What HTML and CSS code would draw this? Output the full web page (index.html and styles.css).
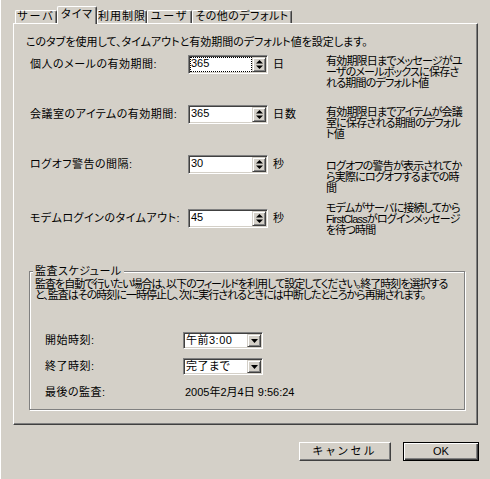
FILE: index.html
```html
<!DOCTYPE html>
<html lang="ja">
<head>
<meta charset="utf-8">
<title>タイマ</title>
<link rel="stylesheet" href="styles.css">
</head>
<body>
<div class="window">
  <div class="tabs">
    <div class="tab t-server">サーバ</div>
    <div class="tab t-timer selected">タイマ</div>
    <div class="tab t-limit">利用制限</div>
    <div class="tab t-user">ユーザ</div>
    <div class="tab t-other">その他のデフォルト</div>
  </div>
  <div class="panel">
    <p class="intro">このタブを使用して、タイムアウトと有効期間のデフォルト値を設定します。</p>

    <div class="row r1">
      <span class="label">個人のメールの有効期間:</span>
      <div class="spin"><span class="val focus">365</span><span class="spinbtn"><svg width="7" height="11" viewBox="0 0 7 11"><polygon points="0,4.5 3.5,1 7,4.5" fill="#000"/><polygon points="0,6.5 3.5,10 7,6.5" fill="#000"/></svg></span></div>
      <span class="unit">日</span>
      <p class="desc">有効期限日までメッセージがユ<br>ーザのメールボックスに保存さ<br>れる期間のデフォルト値</p>
    </div>

    <div class="row r2">
      <span class="label">会議室のアイテムの有効期間:</span>
      <div class="spin"><span class="val">365</span><span class="spinbtn"><svg width="7" height="11" viewBox="0 0 7 11"><polygon points="0,4.5 3.5,1 7,4.5" fill="#000"/><polygon points="0,6.5 3.5,10 7,6.5" fill="#000"/></svg></span></div>
      <span class="unit">日数</span>
      <p class="desc">有効期限日までアイテムが会議<br>室に保存される期間のデフォル<br>ト値</p>
    </div>

    <div class="row r3">
      <span class="label">ログオフ警告の間隔:</span>
      <div class="spin"><span class="val">30</span><span class="spinbtn"><svg width="7" height="11" viewBox="0 0 7 11"><polygon points="0,4.5 3.5,1 7,4.5" fill="#000"/><polygon points="0,6.5 3.5,10 7,6.5" fill="#000"/></svg></span></div>
      <span class="unit">秒</span>
      <p class="desc">ログオフの警告が表示されてか<br>ら実際にログオフするまでの時<br>間</p>
    </div>

    <div class="row r4">
      <span class="label">モデムログインのタイムアウト:</span>
      <div class="spin"><span class="val">45</span><span class="spinbtn"><svg width="7" height="11" viewBox="0 0 7 11"><polygon points="0,4.5 3.5,1 7,4.5" fill="#000"/><polygon points="0,6.5 3.5,10 7,6.5" fill="#000"/></svg></span></div>
      <span class="unit">秒</span>
      <p class="desc">モデムがサーバに接続してから<br>FirstClassがログインメッセージ<br>を待つ時間</p>
    </div>

    <fieldset class="group">
      <legend>監査スケジュール</legend>
      <p class="group-text">監査を自動で行いたい場合は、以下のフィールドを利用して設定してください。終了時刻を選択する<br>と、監査はその時刻に一時停止し、次に実行されるときには中断したところから再開されます。</p>
      <div class="sched">
        <span class="label">開始時刻:</span>
        <div class="combo"><span class="cval">午前3:00</span><span class="dropbtn"><svg width="7" height="4" viewBox="0 0 7 4"><polygon points="0,0 7,0 3.5,4" fill="#000"/></svg></span></div>
        <span class="label">終了時刻:</span>
        <div class="combo"><span class="cval">完了まで</span><span class="dropbtn"><svg width="7" height="4" viewBox="0 0 7 4"><polygon points="0,0 7,0 3.5,4" fill="#000"/></svg></span></div>
        <span class="label">最後の監査:</span>
        <span class="last">2005年2月4日 9:56:24</span>
      </div>
    </fieldset>
  </div>
  <div class="footer">
    <button class="btn cancel">キャンセル</button>
    <button class="btn ok default">OK</button>
  </div>
</div>
</body>
</html>
```

FILE: styles.css
```css
html, body {
  margin: 0;
  padding: 0;
}

body {
  background: #d4d0c8;
  color: #000;
  font-family: "Liberation Sans", "Noto Sans CJK JP", sans-serif;
  font-size: 11px;
  font-feature-settings: "palt";
}

.window {
  width: 490px;
  height: 479px;
  box-sizing: border-box;
  border-left: 1px solid #ffffff;
  padding: 7px 0 0 12px;
  overflow: hidden;
}

/* ---------- tabs ---------- */
.tabs {
  display: flex;
  align-items: flex-end;
  height: 16px;
  padding-left: 2px;
}

.tab {
  box-sizing: border-box;
  height: 13px;
  line-height: 11px;
  padding: 0;
  text-align: center;
  letter-spacing: 1px;
  background: #d4d0c8;
  border-top: 1px solid #ffffff;
  border-left: 1px solid #ffffff;
  border-right: 1px solid #404040;
  border-radius: 2px 2px 0 0;
  box-shadow: inset -1px 0 0 #808080;
  white-space: nowrap;
}

.t-server { width: 42px; letter-spacing: 2px; }
.t-timer { width: 40px; }
.t-limit { width: 50px; }
.t-user { width: 45px; letter-spacing: 2px; }
.t-other { width: 100px; letter-spacing: 0.5px; }

.tab.selected {
  height: 18px;
  line-height: 14px;
  margin-bottom: -1px;
  position: relative;
  z-index: 1;
}

/* ---------- panel ---------- */
.panel {
  box-sizing: border-box;
  width: 465px;
  height: 402px;
  border: 1px solid;
  border-color: #ffffff #404040 #404040 #ffffff;
  box-shadow: inset -1px -1px 0 #808080;
  padding: 11px 0 0 12px;
}

.intro {
  margin: 0;
  line-height: 14px;
  white-space: nowrap;
}

.row {
  display: grid;
  grid-template-columns: 158px 80px 58px 1fr;
  align-items: start;
  padding-left: 4px;
  height: 50px;
}

.r1 { margin-top: 6px; }
.r3 { height: 54px; }

.label {
  line-height: 19px;
  letter-spacing: 0.5px;
  white-space: nowrap;
}

.unit {
  line-height: 19px;
  padding-left: 5px;
  letter-spacing: 1px;
}

.desc {
  margin: 0;
  line-height: 11px;
  letter-spacing: -0.8px;
  white-space: nowrap;
}

.r1 .desc { margin-top: 1px; }
.r2 .desc { margin-top: 2px; }
.r3 .desc { margin-top: 6px; }
.r4 .desc { margin-top: -6px; }

/* ---------- sunken fields ---------- */
.spin,
.combo {
  box-sizing: border-box;
  display: flex;
  align-items: stretch;
  background: #ffffff;
  border: 1px solid;
  border-color: #808080 #ffffff #ffffff #808080;
  box-shadow: inset 1px 1px 0 #404040, inset -1px -1px 0 #d4d0c8;
  padding: 1px;
}

.spin {
  width: 80px;
  height: 19px;
}

.val {
  flex: 1;
  box-sizing: border-box;
  line-height: 13px;
  padding-left: 1px;
}

.val.focus {
  outline: 1px dotted #000;
  outline-offset: -1px;
}

.spinbtn,
.dropbtn {
  box-sizing: border-box;
  display: flex;
  align-items: center;
  justify-content: center;
  background: #d4d0c8;
  border: 1px solid;
  border-color: #d4d0c8 #404040 #404040 #d4d0c8;
  box-shadow: inset 1px 1px 0 #ffffff, inset -1px -1px 0 #808080;
}

.spinbtn {
  width: 14px;
}

.spinbtn svg,
.dropbtn svg {
  display: block;
}

/* ---------- group ---------- */
.group {
  box-sizing: border-box;
  width: 436px;
  margin: 5px 0 0 3px;
  padding: 0 0 8px 5px;
  border: 1px solid #808080;
  box-shadow: inset 1px 1px 0 #ffffff, 1px 1px 0 #ffffff;
  min-inline-size: 0;
}

.group legend {
  padding: 0 2px;
  margin-left: -2px;
  line-height: 14px;
  letter-spacing: 0.5px;
  background: #d4d0c8;
}

.group-text {
  margin: 1px 0 0;
  line-height: 11px;
  letter-spacing: -1px;
  white-space: nowrap;
}

.sched {
  display: grid;
  grid-template-columns: 138px 80px;
  grid-auto-rows: 17px;
  row-gap: 9px;
  align-items: center;
  margin-top: 31px;
  padding-left: 10px;
}

.sched .label {
  line-height: 17px;
}

.combo {
  width: 80px;
  height: 17px;
}

.cval {
  flex: 1;
  line-height: 13px;
  padding-left: 1px;
  letter-spacing: 0.5px;
  white-space: nowrap;
}

.dropbtn {
  width: 14px;
}

.last {
  line-height: 17px;
  padding-left: 2px;
  white-space: nowrap;
}

/* ---------- footer ---------- */
.footer {
  display: flex;
  justify-content: flex-end;
  gap: 12px;
  margin-top: 17px;
  padding-right: 11px;
}

.btn {
  box-sizing: border-box;
  height: 19px;
  margin: 0;
  padding: 0;
  font: inherit;
  line-height: 15px;
  color: #000;
  background: #d4d0c8;
  border: 1px solid;
  border-color: #ffffff #404040 #404040 #ffffff;
  box-shadow: inset -1px -1px 0 #808080;
}

.cancel {
  width: 92px;
  letter-spacing: 3px;
}

.ok {
  width: 76px;
}

.btn.default {
  border: 1px solid #000;
  box-shadow: inset 1px 1px 0 #ffffff, inset -1px -1px 0 #404040, inset -2px -2px 0 #808080;
}
```
